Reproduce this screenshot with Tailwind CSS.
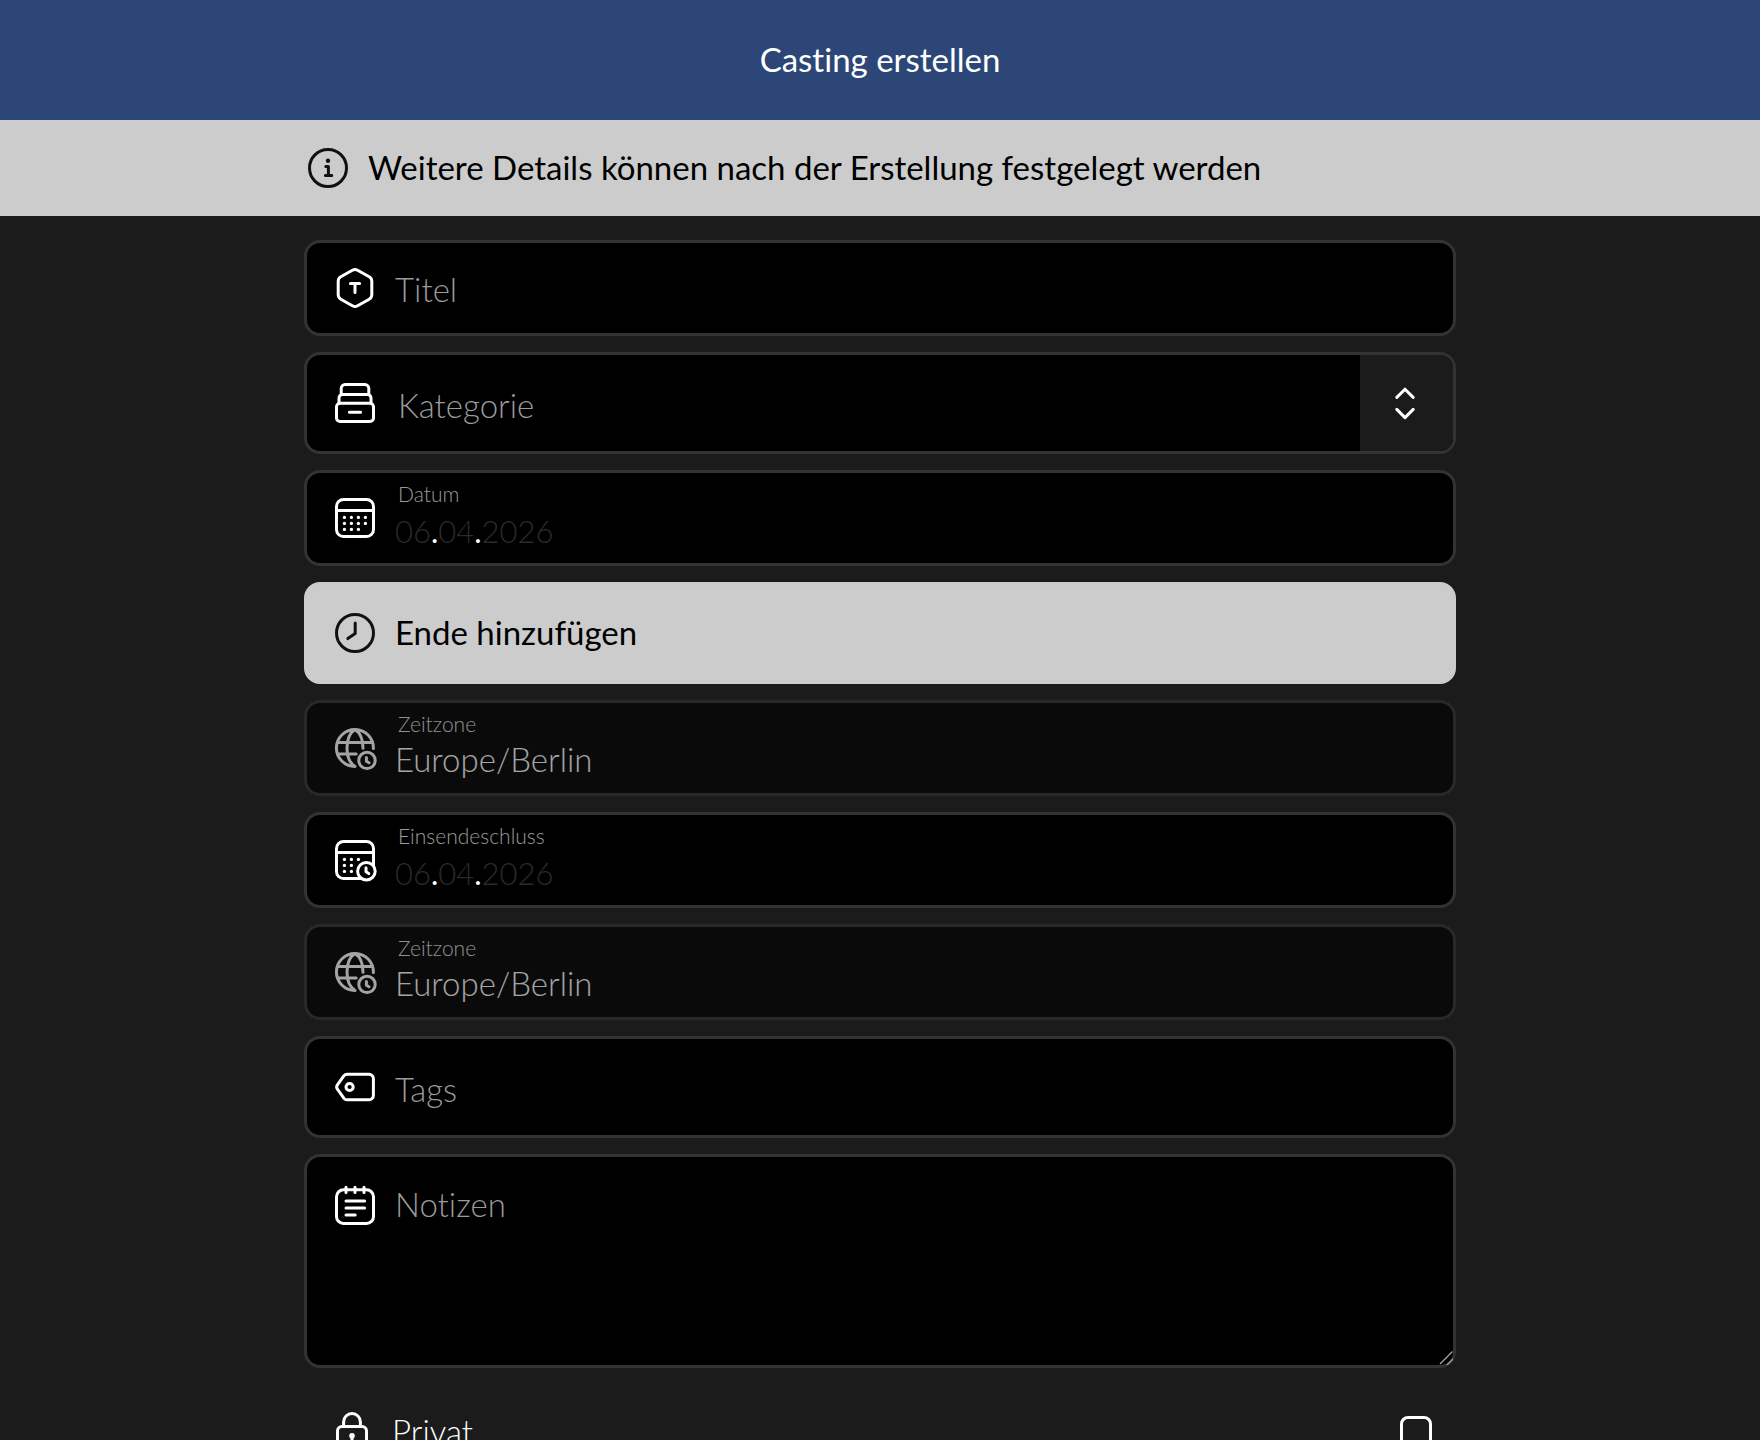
<!DOCTYPE html>
<html lang="de">
<head>
<meta charset="utf-8">
<meta name="viewport" content="width=device-width, initial-scale=1">
<title>Casting erstellen</title>
<script src="https://cdn.jsdelivr.net/npm/@tailwindcss/browser@4"></script>
</head>
<body class="min-h-screen bg-[#1b1b1b] font-['Lato',sans-serif] text-[33px] leading-[48px] font-light text-white [font-variant-ligatures:no-common-ligatures]">
<header class="flex h-[120px] items-center justify-center bg-[#2c4678] pb-[2px]">
  <h1 class="font-normal">Casting erstellen</h1>
</header>
<div class="bg-[#ccc] text-black">
  <div class="mx-auto flex h-24 max-w-6xl items-center gap-4">
    <svg class="size-12 shrink-0 text-[#111]" viewBox="0 0 24 24" fill="none" stroke="currentColor" stroke-width="1.5" stroke-linecap="round" stroke-linejoin="round"><circle cx="12" cy="12" r="9.25"/><path d="M10.9 11.2h1.3v4.5M10.7 15.8h3.2"/><circle cx="12" cy="8.4" r="1.1" fill="currentColor" stroke="none"/></svg>
    <p class="pb-[2px] font-normal">Weitere Details können nach der Erstellung festgelegt werden</p>
  </div>
</div>
<main>
<form class="mx-auto flex max-w-6xl flex-col gap-4 pt-6">
  <div class="flex h-24 items-center gap-4 rounded-2xl border-3 border-[#333] bg-black px-6">
    <svg class="size-12 shrink-0" viewBox="0 0 24 24" fill="none" stroke="currentColor" stroke-width="1.5" stroke-linecap="round" stroke-linejoin="round"><path d="M10.7 3.1a2.6 2.6 0 0 1 2.6 0l5.8 3.3a2.6 2.6 0 0 1 1.3 2.2v6.8a2.6 2.6 0 0 1-1.3 2.2l-5.8 3.3a2.6 2.6 0 0 1-2.6 0l-5.8-3.3a2.6 2.6 0 0 1-1.3-2.2V8.6a2.6 2.6 0 0 1 1.3-2.2z"/><path d="M9.7 9.8h4.6M12 9.800v4.400"/></svg>
    <input aria-label="Titel" type="text" placeholder="Titel" class="min-w-0 flex-1 pt-[2px] outline-none placeholder:text-[#9b9b9b]">
  </div>

  <div class="flex h-[102px] items-center overflow-hidden rounded-2xl border-3 border-[#333] bg-black pl-6">
    <svg class="size-12 shrink-0" viewBox="0 0 24 24" fill="none" stroke="currentColor" stroke-width="1.5" stroke-linecap="round" stroke-linejoin="round"><rect x="2.75" y="12.1" width="18.5" height="9.15" rx="1.8"/><path d="M4 12V9.5A1.7 1.7 0 0 1 5.7 7.8h12.6A1.7 1.7 0 0 1 20 9.5V12M5.1 7.700V4.700a1.900 1.900 0 0 1 1.900-1.900h10a1.900 1.900 0 0 1 1.900 1.900v3M9.200 16.600h5.600"/></svg>
    <div class="relative flex h-full flex-1 items-center">
      <select aria-label="Kategorie" class="h-full w-full appearance-none pt-1 pr-24 pl-[19px] text-[#9b9b9b] outline-none"><option>Kategorie</option></select>
      <span class="pointer-events-none absolute inset-y-0 right-0 flex items-center bg-[#1b1b1b] pr-6 pl-[21px]">
        <svg class="size-12" viewBox="0 0 24 24" fill="none" stroke="currentColor" stroke-width="1.5" stroke-linecap="round" stroke-linejoin="round"><path d="M7.9 9.2 12 5.1l4.1 4.1M7.9 15.2l4.1 4.1 4.1-4.1"/></svg>
      </span>
    </div>
  </div>

  <div role="group" aria-label="Datum" class="flex h-24 items-center gap-4 rounded-2xl border-3 border-[#333] bg-black px-6">
    <svg class="size-12 shrink-0" viewBox="0 0 24 24" fill="none" stroke="currentColor" stroke-width="1.5"><rect x="2.75" y="2.75" width="18.5" height="18.5" rx="3.5"/><path d="M3 8.2h18"/><path d="M6.7 11.7h0M10.2 11.7h0M13.7 11.7h0M17.2 11.7h0M6.7 14.7h0M10.2 14.7h0M13.7 14.7h0M17.2 14.7h0M6.7 17.7h0M10.2 17.7h0M13.7 17.7h0" stroke-width="1.7" stroke-linecap="round"/></svg>
    <div class="flex h-full flex-1 flex-col pt-[9px]">
      <label for="datum-tag" class="pl-[3px] text-[21px] leading-6 text-[#9b9b9b]">Datum</label>
      <div class="flex text-[31px] leading-[50px]">
        <input id="datum-tag" type="text" inputmode="numeric" value="06" class="field-sizing-content text-[#2b2b2b] outline-none"><span class="font-normal">.</span><input aria-label="Monat" type="text" inputmode="numeric" value="04" class="field-sizing-content text-[#2b2b2b] outline-none"><span class="font-normal">.</span><input aria-label="Jahr" type="text" inputmode="numeric" value="2026" class="field-sizing-content text-[#2b2b2b] outline-none">
      </div>
    </div>
  </div>

  <button type="button" class="flex h-[102px] items-center gap-4 rounded-2xl border-3 border-[#ccc] bg-[#ccc] px-6 text-left font-normal text-black">
    <svg class="size-12 shrink-0 text-[#111]" viewBox="0 0 24 24" fill="none" stroke="currentColor" stroke-width="1.5" stroke-linecap="round" stroke-linejoin="round"><circle cx="12" cy="12" r="9.25"/><path d="M12.1 7v5.3l-3.7 2.5"/></svg>
    <span class="pb-[2px]">Ende hinzufügen</span>
  </button>

  <div class="flex h-24 items-center gap-4 rounded-2xl border-3 border-[#333] bg-black px-6 opacity-60">
    <svg class="size-12 shrink-0" viewBox="0 0 24 24" fill="none" stroke="currentColor" stroke-width="1.5" stroke-linecap="round"><path d="M21.2 12.3A9.25 9.25 0 1 0 12 21.25M12 2.75C9.3 4.5 8 8 8 12s1.3 7.5 4 9.25M12 2.75c2.7 1.75 4 5.25 4 9.4M3.3 9.2h17.4M3.3 15h9.3"/><circle cx="18" cy="18.2" r="4.1"/><path d="M17.7 16.7v1.9l1.3.8" stroke-linejoin="round"/></svg>
    <div class="flex h-full flex-1 flex-col pt-[9px]">
      <label for="zone-start" class="pl-[3px] text-[21px] leading-6 text-[#ddd]">Zeitzone</label>
      <input id="zone-start" disabled type="text" value="Europe/Berlin" class="h-[46px] leading-[46px] outline-none">
    </div>
  </div>

  <div role="group" aria-label="Einsendeschluss" class="flex h-24 items-center gap-4 rounded-2xl border-3 border-[#333] bg-black px-6">
    <svg class="size-12 shrink-0" viewBox="0 0 24 24" fill="none" stroke="currentColor" stroke-width="1.5"><rect x="2.75" y="2.75" width="18.5" height="18.5" rx="3.5"/><path d="M3 8.2h18"/><path d="M6.7 11.7h0M10.2 11.7h0M13.7 11.7h0M6.7 14.7h0M10.2 14.7h0M6.7 17.7h0M10.2 17.7h0" stroke-width="1.7" stroke-linecap="round"/><circle cx="17.7" cy="17.6" r="4.4" fill="black"/><path d="M17.5 15.9v2l1.4.9" stroke-linecap="round" stroke-linejoin="round"/></svg>
    <div class="flex h-full flex-1 flex-col pt-[9px]">
      <label for="schluss-tag" class="pl-[3px] text-[21px] leading-6 text-[#9b9b9b]">Einsendeschluss</label>
      <div class="flex text-[31px] leading-[50px]">
        <input id="schluss-tag" type="text" inputmode="numeric" value="06" class="field-sizing-content text-[#2b2b2b] outline-none"><span class="font-normal">.</span><input aria-label="Monat" type="text" inputmode="numeric" value="04" class="field-sizing-content text-[#2b2b2b] outline-none"><span class="font-normal">.</span><input aria-label="Jahr" type="text" inputmode="numeric" value="2026" class="field-sizing-content text-[#2b2b2b] outline-none">
      </div>
    </div>
  </div>

  <div class="flex h-24 items-center gap-4 rounded-2xl border-3 border-[#333] bg-black px-6 opacity-60">
    <svg class="size-12 shrink-0" viewBox="0 0 24 24" fill="none" stroke="currentColor" stroke-width="1.5" stroke-linecap="round"><path d="M21.2 12.3A9.25 9.25 0 1 0 12 21.25M12 2.75C9.3 4.5 8 8 8 12s1.3 7.5 4 9.25M12 2.75c2.7 1.75 4 5.25 4 9.4M3.3 9.2h17.4M3.3 15h9.3"/><circle cx="18" cy="18.2" r="4.1"/><path d="M17.7 16.7v1.9l1.3.8" stroke-linejoin="round"/></svg>
    <div class="flex h-full flex-1 flex-col pt-[9px]">
      <label for="zone-schluss" class="pl-[3px] text-[21px] leading-6 text-[#ddd]">Zeitzone</label>
      <input id="zone-schluss" disabled type="text" value="Europe/Berlin" class="h-[46px] leading-[46px] outline-none">
    </div>
  </div>

  <div class="flex h-[102px] items-center gap-4 rounded-2xl border-3 border-[#333] bg-black px-6">
    <svg class="size-12 shrink-0" viewBox="0 0 24 24" fill="none" stroke="currentColor" stroke-width="1.5" stroke-linejoin="round"><path d="M8 5.6h11a2.2 2.2 0 0 1 2.2 2.2v8.4a2.2 2.2 0 0 1-2.2 2.2H8a2 2 0 0 1-1.5-.7l-3.3-4.6a1.9 1.9 0 0 1 0-2.2l3.3-4.6A2 2 0 0 1 8 5.6z"/><circle cx="9.3" cy="12" r="1.8"/></svg>
    <input aria-label="Tags" type="text" placeholder="Tags" class="min-w-0 flex-1 pt-1 outline-none placeholder:text-[#9b9b9b]">
  </div>

  <div class="relative flex h-[214px] gap-4 rounded-2xl border-3 border-[#333] bg-black pt-6 pl-6">
    <svg class="size-12 shrink-0" viewBox="0 0 24 24" fill="none" stroke="currentColor" stroke-width="1.5" stroke-linecap="round"><rect x="2.75" y="4.4" width="18.5" height="16.8" rx="3.5"/><path d="M7.5 3.1v2.7M12 3.1v2.7M16.5 3.1v2.7M7.5 10h9.3M7.5 13.5h9.3M7.5 17h4.6"/></svg>
    <textarea aria-label="Notizen" placeholder="Notizen" class="flex-1 resize-none leading-[46px] outline-none placeholder:text-[#9b9b9b]"></textarea>
    <svg class="absolute right-0 bottom-0 size-4" viewBox="0 0 16 16" stroke="#aaa" stroke-width="1.2"><path d="M3 15 15.5 2.5M10 16l6-6"/></svg>
  </div>

  <label class="flex h-24 items-center gap-4 px-6">
    <svg class="size-12 shrink-0" viewBox="0 0 24 24" fill="none" stroke="currentColor" stroke-width="1.5" stroke-linecap="round"><rect x="4.75" y="9.2" width="14.5" height="12" rx="2.2"/><path d="M7.8 9V7a4.2 4.2 0 0 1 8.4 0v2M12 14v3"/><circle cx="12" cy="13.9" r="1.4" fill="currentColor" stroke="none"/></svg>
    <span class="flex-1 pb-[2px]">Privat</span>
    <input type="checkbox" class="size-8 appearance-none rounded-lg border-3 border-white">
  </label>
</form>
</main>
</body>
</html>
